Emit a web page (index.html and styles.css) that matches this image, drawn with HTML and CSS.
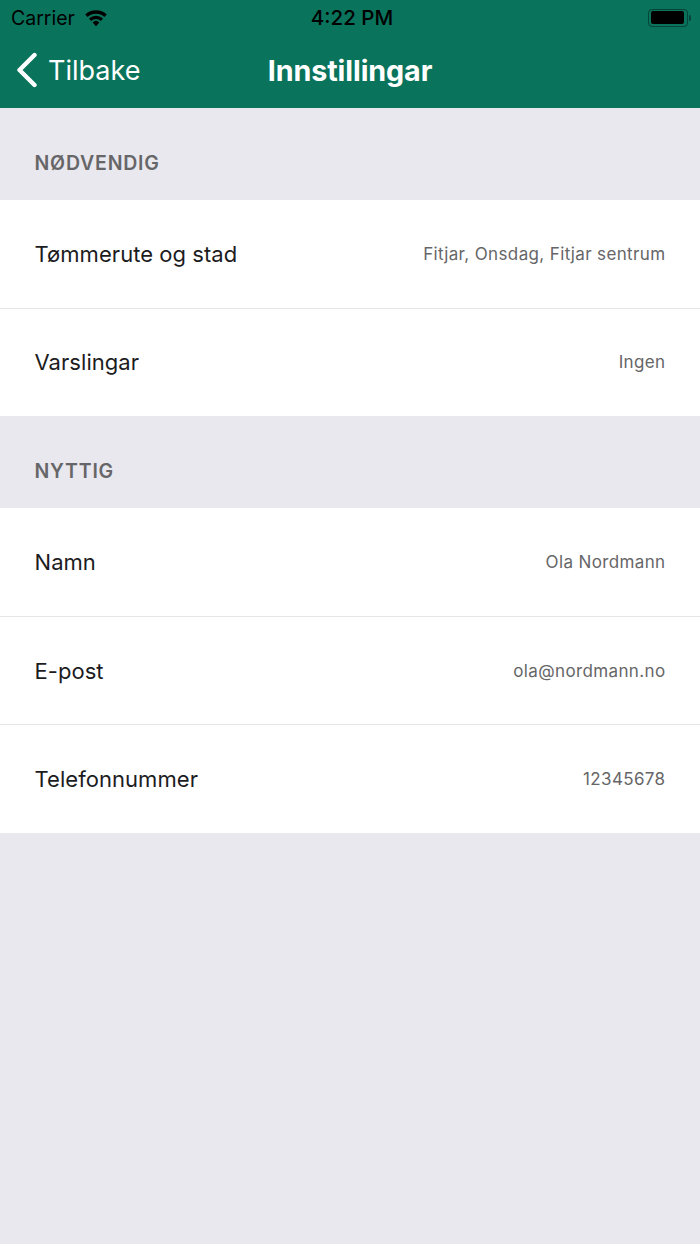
FILE: index.html
```html
<!DOCTYPE html>
<html lang="nn">
<head>
    <meta charset="UTF-8">
    <meta name="viewport" content="width=device-width, initial-scale=1.0">
    <title>Innstillingar</title>
    <link rel="stylesheet" href="styles.css">
</head>
<body>
    <header class="top">
        <div class="status-bar">
            <div class="status-left">
                <span>Carrier</span>
                <svg class="wifi" viewBox="0 0 24 18" width="24" height="18">
                    <path d="M12 17.2 8.6 13.4a5 5 0 0 1 6.8 0z"/>
                    <path d="M7.2 11.9 5 9.5a10.4 10.4 0 0 1 14 0l-2.2 2.4a7.2 7.2 0 0 0-9.6 0z"/>
                    <path d="M3.6 8 1.2 5.4a16 16 0 0 1 21.6 0L20.4 8a12.6 12.6 0 0 0-16.8 0z"/>
                </svg>
            </div>
            <div class="status-time">4:22 PM</div>
            <div class="status-right">
                <div class="battery"><div class="battery-fill"></div></div>
                <div class="battery-cap"></div>
            </div>
        </div>
        <nav class="nav-bar">
            <a class="back">
                <svg class="back-icon" viewBox="0 0 22 36" width="22" height="36">
                    <path d="M18.5 3 3.5 18l15 15" fill="none" stroke="#fff" stroke-width="4.4" stroke-linecap="round" stroke-linejoin="round"/>
                </svg>
                <span>Tilbake</span>
            </a>
            <h1>Innstillingar</h1>
        </nav>
    </header>

    <main>
        <h2 class="section-title">NØDVENDIG</h2>
        <ul class="list">
            <li class="row"><span class="label">Tømmerute og stad</span><span class="value">Fitjar, Onsdag, Fitjar sentrum</span></li>
            <li class="row"><span class="label">Varslingar</span><span class="value">Ingen</span></li>
        </ul>

        <h2 class="section-title">NYTTIG</h2>
        <ul class="list">
            <li class="row"><span class="label">Namn</span><span class="value">Ola Nordmann</span></li>
            <li class="row"><span class="label">E-post</span><span class="value">ola@nordmann.no</span></li>
            <li class="row"><span class="label">Telefonnummer</span><span class="value">12345678</span></li>
        </ul>
    </main>
</body>
</html>
```

FILE: styles.css
```css
* {
    margin: 0;
    padding: 0;
    box-sizing: border-box;
}

body {
    font-family: Inter, "Liberation Sans", Arial, sans-serif;
    background-color: #e9e8ee;
    color: #1c1c1e;
    height: 1244px;
    overflow: hidden;
}

/* top bar */
.top {
    background: #0a735c;
    height: 108px;
}

.status-bar {
    height: 37px;
    display: grid;
    grid-template-columns: 1fr auto 1fr;
    align-items: center;
    padding: 0 9px 2px 11px;
    color: #000;
    font-size: 19.5px;
}

.status-left {
    display: flex;
    align-items: center;
    gap: 9px;
}

.wifi {
    fill: #000;
}

.status-time {
    margin-left: 2px;
    font-weight: 500;
    font-size: 20.5px;
}

.status-right {
    display: flex;
    justify-content: flex-end;
    align-items: center;
    gap: 1px;
}

.battery {
    width: 40px;
    height: 18px;
    border: 1.5px solid rgba(0, 0, 0, 0.4);
    border-radius: 4px;
    padding: 1.5px 3px 1.5px 1.5px;
}

.battery-fill {
    height: 100%;
    background: #000;
    border-radius: 2px;
}

.battery-cap {
    width: 2px;
    height: 6px;
    background: rgba(0, 0, 0, 0.4);
    border-radius: 0 2px 2px 0;
}

.nav-bar {
    height: 66px;
    display: flex;
    align-items: center;
    justify-content: center;
    position: relative;
    color: #fff;
}

.nav-bar h1 {
    font-size: 28.7px;
    font-weight: 700;
    letter-spacing: -0.1px;
}

.back {
    position: absolute;
    left: 16px;
    top: 15px;
    display: flex;
    align-items: center;
    gap: 10px;
    font-size: 27px;
}

/* list */
.section-title {
    height: 91.5px;
    padding: 44px 34.5px 0;
    font-size: 19.5px;
    line-height: 23px;
    font-weight: 600;
    letter-spacing: 0.8px;
    color: #666668;
}

.list {
    list-style: none;
    background: #fff;
}

.row {
    height: 108.33px;
    display: flex;
    align-items: center;
    justify-content: space-between;
    padding: 0 34.5px;
}

.row + .row {
    border-top: 1px solid #e6e6e8;
}

.label {
    font-size: 22px;
    letter-spacing: 0.05px;
}

.value {
    font-size: 17px;
    color: #666668;
    letter-spacing: 0.37px;
}
```
